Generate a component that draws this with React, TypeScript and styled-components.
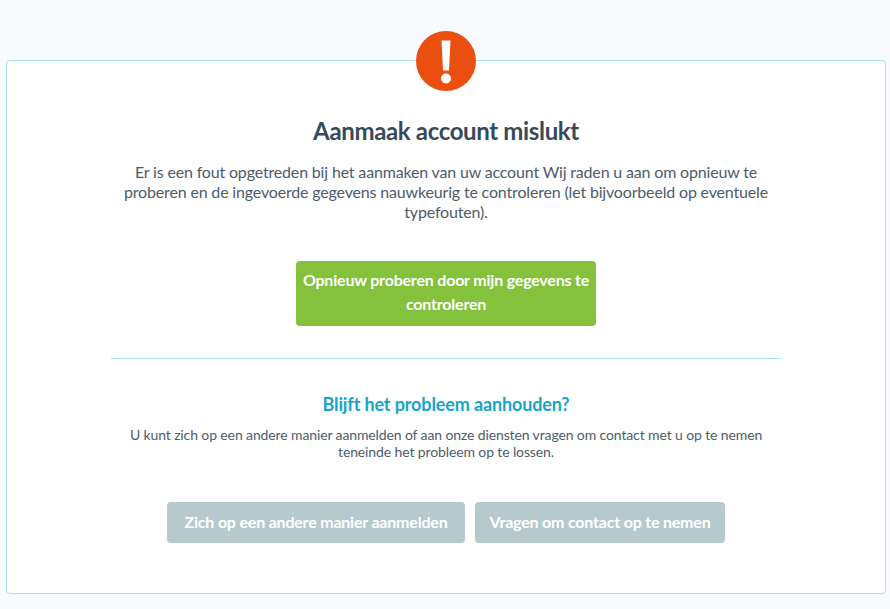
import React from "react";
import styled, { createGlobalStyle } from "styled-components";

const Global = createGlobalStyle`
  html, body {
    margin: 0;
    padding: 0;
    background: #f9fafd;
    font-family: "Lato", "Noto Sans", sans-serif;
  }
`;

const Page = styled.div`
  height: 609px;
  box-sizing: border-box;
  padding: 60px 4px 15px 6px;
`;

const Card = styled.section`
  position: relative;
  box-sizing: border-box;
  height: 534px;
  background: #fff;
  border: 1px solid #a8e2e6;
  border-radius: 4px;
  padding: 55px 104px 0;
  display: flex;
  flex-direction: column;
  align-items: center;
  text-align: center;
`;

const Badge = styled.svg`
  position: absolute;
  top: -30px;
  left: 409px;
  width: 60px;
  height: 60px;
`;

const Title = styled.h1`
  margin: 0;
  font-size: 24px;
  line-height: 30px;
  font-weight: 700;
  letter-spacing: -0.35px;
  color: #364a5a;
`;

const Intro = styled.p`
  margin: 16px 0 0;
  font-size: 16px;
  line-height: 20px;
  letter-spacing: -0.17px;
  color: #4c5c6c;
`;

const Button = styled.button<{ $tone: "green" | "grey" }>`
  border: 0;
  border-radius: 4px;
  font-family: inherit;
  font-weight: 700;
  font-size: 16px;
  letter-spacing: -0.2px;
  color: #fff;
  background: ${(p) => (p.$tone === "green" ? "#84c13d" : "#b6c9cd")};
`;

const RetryButton = styled(Button)`
  margin-top: 39px;
  width: 300px;
  height: 65px;
  line-height: 24px;
  padding: 0 6px 4px;
`;

const Divider = styled.hr`
  align-self: stretch;
  width: 670px;
  margin: 32px 0 0;
  border: 0;
  border-top: 1px solid #a8e2e6;
`;

const SubTitle = styled.h2`
  margin: 34px 0 0;
  font-size: 18px;
  line-height: 22px;
  font-weight: 700;
  letter-spacing: -0.13px;
  color: #17a5c6;
`;

const Help = styled.p`
  margin: 11px 0 0;
  font-size: 14px;
  line-height: 17px;
  letter-spacing: -0.12px;
  color: #4c5c6c;
`;

const Actions = styled.div`
  display: flex;
  gap: 10px;
  margin-top: 42px;
`;

const ActionButton = styled(Button)<{ $w: number }>`
  width: ${(p) => p.$w}px;
  height: 41px;
  padding: 0 6px 3px;
`;

export default function App() {
  return (
    <>
      <Global />
      <Page>
        <Card>
          <Badge viewBox="0 0 60 60">
            <circle cx="30" cy="30" r="30" fill="#ea4f10" />
            <path d="M25.5 9.5 L34.5 9.5 L33 39.5 L27 39.5 Z" fill="#fff" />
            <circle cx="30" cy="47.5" r="5" fill="#fff" />
          </Badge>
          <Title>Aanmaak account mislukt</Title>
          <Intro>
            Er is een fout opgetreden bij het aanmaken van uw account Wij raden u aan om opnieuw te
            proberen en de ingevoerde gegevens nauwkeurig te controleren (let bijvoorbeeld op eventuele
            typefouten).
          </Intro>
          <RetryButton $tone="green">Opnieuw proberen door mijn gegevens te controleren</RetryButton>
          <Divider />
          <SubTitle>Blijft het probleem aanhouden?</SubTitle>
          <Help>
            U kunt zich op een andere manier aanmelden of aan onze diensten vragen om contact met u op te nemen
            teneinde het probleem op te lossen.
          </Help>
          <Actions>
            <ActionButton $tone="grey" $w={298}>Zich op een andere manier aanmelden</ActionButton>
            <ActionButton $tone="grey" $w={250}>Vragen om contact op te nemen</ActionButton>
          </Actions>
        </Card>
      </Page>
    </>
  );
}
